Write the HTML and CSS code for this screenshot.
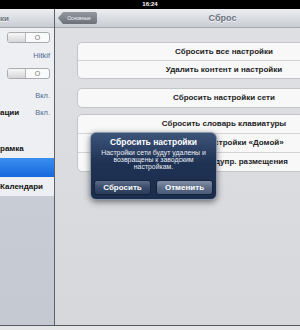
FILE: index.html
```html
<!DOCTYPE html>
<html lang="ru">
<head>
  <meta charset="UTF-8" />
  <meta name="viewport" content="width=device-width, initial-scale=1.0" />
  <title>Сброс</title>
  <link rel="stylesheet" href="styles.css">
</head>
<body>
  <div class="status">16:24</div>

  <div class="screen">
    <div class="master">
      <div class="navbar master-nav"><span class="nav-title">ки</span></div>
      <div class="list">
        <div class="row h19"><span class="switch"><span class="knob"></span><span class="off">O</span></span></div>
        <div class="row h17"><span class="value">Hitkif</span></div>
        <div class="row h19"><span class="switch"><span class="knob"></span><span class="off">O</span></span></div>
        <div class="row h3 gap"></div>
        <div class="row h18"><span class="value">Вкл.</span></div>
        <div class="row h17"><span class="label">ации</span><span class="value">Вкл.</span></div>
        <div class="row h18"></div>
        <div class="row h19"><span class="label">рамка</span></div>
        <div class="row h19 selected"></div>
        <div class="row h19"><span class="label">Календари</span></div>
      </div>
    </div>

    <div class="detail">
      <div class="detail-inner">
        <div class="navbar detail-nav">
          <span class="back">Основные</span>
          <span class="nav-title">Сброс</span>
          <span></span>
        </div>
        <div class="groups">
          <div class="group g1">
            <div class="cell">Сбросить все настройки</div>
            <div class="cell">Удалить контент и настройки</div>
          </div>
          <div class="group g2">
            <div class="cell">Сбросить настройки сети</div>
          </div>
          <div class="group g3">
            <div class="cell">Сбросить словарь клавиатуры</div>
            <div class="cell">Сбросить настройки «Домой»</div>
            <div class="cell">Сбросить предупр. размещения</div>
          </div>
        </div>
      </div>
    </div>
  </div>

  <div class="alert">
    <div class="alert-title">Сбросить настройки</div>
    <div class="alert-text">Настройки сети будут удалены и<br>возвращены к заводским<br>настройкам.</div>
    <div class="alert-buttons">
      <span class="btn">Сбросить</span>
      <span class="btn btn-cancel">Отменить</span>
    </div>
  </div>
</body>
</html>
```

FILE: styles.css
```css
body {
  margin: 0;
  width: 300px;
  height: 330px;
  overflow: hidden;
  position: relative;
  background: #e6e6e8;
  font-family: "Liberation Sans", Arial, sans-serif;
}
.status {
  height: 9px;
  line-height: 9px;
  background: #000;
  color: #fff;
  font-size: 6px;
  font-weight: bold;
  text-align: center;
}
.screen {
  display: flex;
  height: 316px;
  border-bottom: 1px solid #55585d;
}
.navbar {
  height: 18px;
  background: linear-gradient(#eceef1, #c8ccd3);
  border-bottom: 1px solid #a4a8af;
}
.nav-title {
  color: #6c7380;
  font-weight: bold;
  text-shadow: 0 1px 0 #f4f5f7;
}

/* left column */
.master {
  width: 54px;
  flex-shrink: 0;
  border-right: 1px solid #5d6168;
  background: linear-gradient(#d1d5dc, #c3c8d1);
  display: flex;
  flex-direction: column;
}
.master-nav {
  display: flex;
  align-items: center;
  font-size: 8px;
}
.list {
  background: #eeeff2;
}
.row {
  display: flex;
  align-items: center;
  justify-content: flex-end;
  padding-right: 4px;
  font-size: 7.5px;
}
.h3 { height: 3px; }
.h17 { height: 17px; }
.h18 { height: 18px; }
.h19 { height: 19px; }
.label {
  margin-right: auto;
  font-weight: bold;
  font-size: 8px;
  color: #111;
}
.value {
  color: #4f6a94;
}
.selected {
  background: linear-gradient(#3a8ff0, #1668dc);
}
.switch {
  display: flex;
  width: 43px;
  height: 11px;
  box-sizing: border-box;
  border: 1px solid #a9abaf;
  border-radius: 3px;
  overflow: hidden;
  background: #fafafa;
}
.knob {
  width: 17px;
  background: linear-gradient(#f7f7f7, #d6d6d8);
  border-right: 1px solid #b3b5b9;
}
.off {
  flex: 1;
  text-align: center;
  font-size: 7px;
  line-height: 9px;
  color: #7a7a7a;
}

/* right column */
.detail {
  flex: 1;
  overflow: hidden;
  background: linear-gradient(#dfe0e3, #d7d8dc);
}
.detail-inner {
  width: 335px;
}
.detail-nav {
  display: grid;
  grid-template-columns: 1fr auto 1fr;
  align-items: center;
}
.detail-nav .nav-title {
  font-size: 9px;
}
.back {
  justify-self: start;
  margin-left: 3px;
  width: 39px;
  height: 12px;
  line-height: 12px;
  padding-left: 3px;
  box-sizing: border-box;
  text-align: center;
  font-size: 5px;
  color: #f2f3f5;
  background: linear-gradient(#9297a0, #6c717a);
  clip-path: polygon(5px 0, 100% 0, 100% 100%, 5px 100%, 0 50%);
  border-radius: 0 2px 2px 0;
}
.groups {
  padding: 14px 0 0 22px;
}
.group {
  width: 292px;
  background: #f8f8f9;
  border: 1px solid #c2c4c8;
  border-radius: 5px;
}
.g1 { margin-bottom: 9px; }
.g2 { margin-bottom: 6px; }
.cell {
  height: 18px;
  line-height: 18px;
  text-align: center;
  font-size: 8px;
  font-weight: bold;
  color: #1c1c1c;
}
.g1 .cell { height: 17px; line-height: 17px; }
.cell + .cell {
  border-top: 1px solid #d3d4d7;
}

/* alert */
.alert {
  position: absolute;
  left: 90px;
  top: 132px;
  width: 127px;
  height: 68px;
  box-sizing: border-box;
  padding: 4px 3px 4px;
  border: 1px solid #8a97ad;
  border-radius: 6px;
  background: linear-gradient(#3d5479, #1f3254 45%, #1b2d4c);
  box-shadow: 0 2px 6px rgba(0, 0, 0, 0.5);
  color: #fff;
  text-align: center;
}
.alert-title {
  height: 11px;
  line-height: 11px;
  font-size: 8.5px;
  font-weight: bold;
}
.alert-text {
  margin-top: 1px;
  font-size: 6.9px;
  line-height: 7px;
  color: #e8ecf2;
}
.alert-buttons {
  display: flex;
  gap: 5px;
  margin-top: 10px;
}
.btn {
  flex: 1;
  height: 15px;
  line-height: 13px;
  box-sizing: border-box;
  border: 1px solid #16223a;
  border-radius: 3px;
  background: linear-gradient(#5d6e8a, #3a4c6b 50%, #2b3c5b);
  font-size: 8px;
  font-weight: bold;
}
.btn-cancel {
  background: linear-gradient(#8290a8, #5e6d88 50%, #4a5a77);
}
```
